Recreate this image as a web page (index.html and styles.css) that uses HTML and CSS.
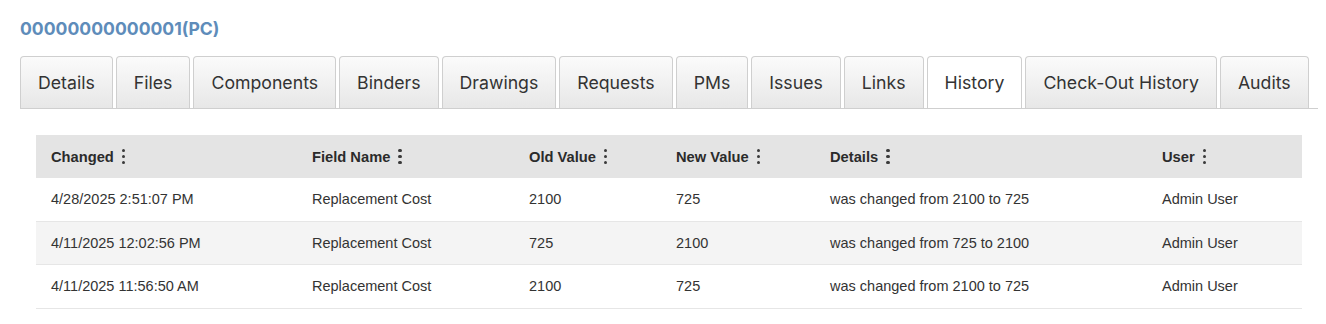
FILE: index.html
```html
<!DOCTYPE html>
<html>
<head>
<meta charset="utf-8">
<link rel="stylesheet" href="styles.css">
</head>
<body>
<div class="page">
  <h1 class="title">00000000000001(PC)</h1>
  <div class="tabs">
    <div class="tab">Details</div>
    <div class="tab">Files</div>
    <div class="tab">Components</div>
    <div class="tab">Binders</div>
    <div class="tab">Drawings</div>
    <div class="tab">Requests</div>
    <div class="tab">PMs</div>
    <div class="tab">Issues</div>
    <div class="tab">Links</div>
    <div class="tab active">History</div>
    <div class="tab">Check-Out History</div>
    <div class="tab">Audits</div>
  </div>
  <table class="grid">
    <colgroup>
      <col class="c1"><col class="c2"><col class="c3"><col class="c4"><col class="c5"><col class="c6">
    </colgroup>
    <thead>
      <tr>
        <th><span class="hd">Changed<span class="kebab"><i></i><i></i><i></i></span></span></th>
        <th><span class="hd">Field Name<span class="kebab"><i></i><i></i><i></i></span></span></th>
        <th><span class="hd">Old Value<span class="kebab"><i></i><i></i><i></i></span></span></th>
        <th><span class="hd">New Value<span class="kebab"><i></i><i></i><i></i></span></span></th>
        <th><span class="hd">Details<span class="kebab"><i></i><i></i><i></i></span></span></th>
        <th><span class="hd">User<span class="kebab"><i></i><i></i><i></i></span></span></th>
      </tr>
    </thead>
    <tbody>
      <tr>
        <td>4/28/2025 2:51:07 PM</td><td>Replacement Cost</td><td>2100</td><td>725</td><td>was changed from 2100 to 725</td><td>Admin User</td>
      </tr>
      <tr class="alt">
        <td>4/11/2025 12:02:56 PM</td><td>Replacement Cost</td><td>725</td><td>2100</td><td>was changed from 725 to 2100</td><td>Admin User</td>
      </tr>
      <tr>
        <td>4/11/2025 11:56:50 AM</td><td>Replacement Cost</td><td>2100</td><td>725</td><td>was changed from 2100 to 725</td><td>Admin User</td>
      </tr>
    </tbody>
  </table>
</div>
</body>
</html>
```
FILE: styles.css
```css
html, body {
  margin: 0;
  padding: 0;
  background: #fff;
}
.page {
  padding: 17px 8px 0 20px;
}
.title {
  margin: 0 0 16px 0;
  font-family: "Inter", "Open Sans", sans-serif;
  font-weight: 700;
  font-size: 17.6px;
  line-height: 23px;
  color: #5e8cba;
}
.tabs {
  display: flex;
  gap: 3px;
  border-bottom: 1px solid #cfcfcf;
}
.tab {
  height: 51px;
  padding: 0 17px;
  display: flex;
  align-items: center;
  border: 1px solid #cfcfcf;
  border-bottom: none;
  border-radius: 4px 4px 0 0;
  background: linear-gradient(#fbfbfb, #e7e7e7);
  font-family: "Inter", "Open Sans", sans-serif;
  font-size: 17.7px;
  color: #333;
  white-space: nowrap;
}
.tab.active {
  background: #fff;
}
.grid {
  margin: 26px 0 0 16px;
  width: 1266px;
  border-collapse: collapse;
  table-layout: fixed;
  font-family: "Liberation Sans", Arial, sans-serif;
  font-size: 14.5px;
  color: #333;
}
.c1 { width: 261px; }
.c2 { width: 217px; }
.c3 { width: 147px; }
.c4 { width: 154px; }
.c5 { width: 332px; }
.c6 { width: 155px; }
.grid th {
  background: #e4e4e4;
  height: 43px;
  padding: 0 15px;
  text-align: left;
  font-weight: 700;
  font-size: 14.7px;
  color: #2b2b2b;
}
.hd {
  display: inline-flex;
  align-items: center;
  gap: 8px;
}
.kebab {
  display: inline-flex;
  flex-direction: column;
  gap: 2.5px;
}
.kebab i {
  display: block;
  width: 3.4px;
  height: 3.4px;
  border-radius: 50%;
  background: #3a3a3a;
}
.grid td {
  height: 42.5px;
  padding: 0 15px;
  border-bottom: 1px solid #e6e6e6;
  white-space: nowrap;
}
.grid tr.alt td {
  background: #f4f4f4;
}
```
